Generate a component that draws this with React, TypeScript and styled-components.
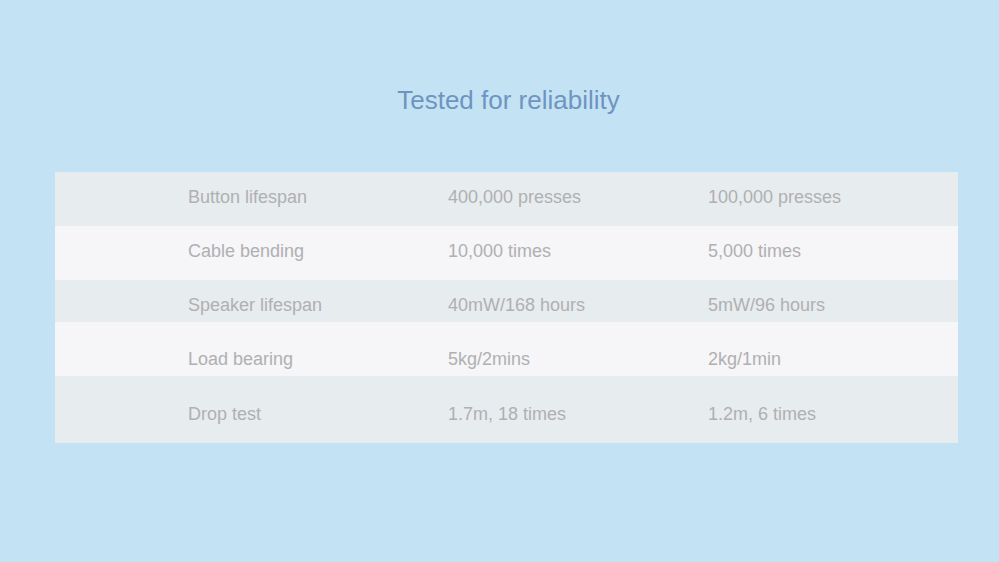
import styled, { createGlobalStyle } from "styled-components";

const GlobalStyle = createGlobalStyle`
  html, body {
    margin: 0;
    padding: 0;
    background: #c3e3f4;
    font-family: "Liberation Sans", Arial, sans-serif;
  }
`;

const Page = styled.main`
  width: 999px;
  height: 562px;
  background: #c3e3f4;
  overflow: hidden;
`;

const Title = styled.h1`
  margin: 0;
  padding: 84px 0 0 18px;
  height: 172px;
  box-sizing: border-box;
  text-align: center;
  font-size: 26px;
  line-height: 32px;
  font-weight: 300;
  color: #7094c0;
`;

const Table = styled.section`
  margin: 0 41px 0 55px;
  display: flex;
  flex-direction: column;
`;

const Row = styled.div<{ $shade: boolean; $height: number; $offset: number }>`
  height: ${(p) => p.$height}px;
  padding-top: ${(p) => p.$offset}px;
  box-sizing: border-box;
  display: grid;
  grid-template-columns: 260px 260px 1fr;
  padding-left: 133px;
  background: ${(p) => (p.$shade ? "#e7ecee" : "#f6f5f7")};
`;

const Cell = styled.div`
  font-size: 18px;
  line-height: 20px;
  color: #b0b0b2;
`;

type TRow = {
  label: string;
  ours: string;
  theirs: string;
  height: number;
  offset: number;
};

const rows: TRow[] = [
  { label: "Button lifespan", ours: "400,000 presses", theirs: "100,000 presses", height: 54, offset: 15 },
  { label: "Cable bending", ours: "10,000 times", theirs: "5,000 times", height: 54, offset: 15 },
  { label: "Speaker lifespan", ours: "40mW/168 hours", theirs: "5mW/96 hours", height: 42, offset: 15 },
  { label: "Load bearing", ours: "5kg/2mins", theirs: "2kg/1min", height: 54, offset: 27 },
  { label: "Drop test", ours: "1.7m, 18 times", theirs: "1.2m, 6 times", height: 67, offset: 28 },
];

const App = () => {
  return (
    <>
      <GlobalStyle />
      <Page>
        <Title>Tested for reliability</Title>
        <Table>
          {rows.map((row, index) => (
            <Row key={index} $shade={index % 2 === 0} $height={row.height} $offset={row.offset}>
              <Cell>{row.label}</Cell>
              <Cell>{row.ours}</Cell>
              <Cell>{row.theirs}</Cell>
            </Row>
          ))}
        </Table>
      </Page>
    </>
  );
};

export default App;
